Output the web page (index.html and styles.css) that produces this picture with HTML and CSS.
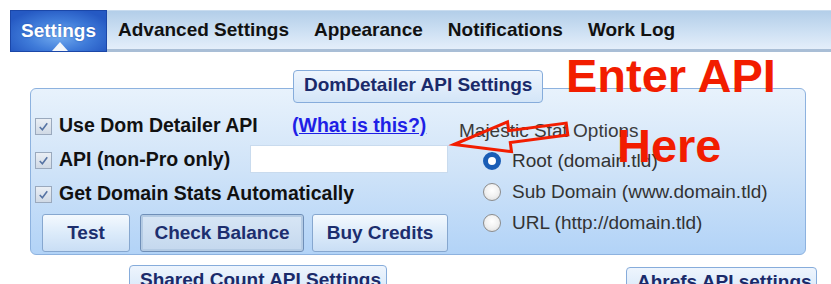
FILE: index.html
```html
<!DOCTYPE html>
<html lang="en">
<head>
<meta charset="utf-8">
<title>Settings</title>
<link rel="stylesheet" href="styles.css">
</head>
<body>
<div class="page">
  <nav class="tabs">
    <div class="tab active">Settings</div>
    <div class="tab">Advanced Settings</div>
    <div class="tab">Appearance</div>
    <div class="tab">Notifications</div>
    <div class="tab">Work Log</div>
  </nav>

  <section class="group">
    <div class="group-title">DomDetailer API Settings</div>
    <div class="group-box">
      <div class="left">
        <div class="row">
          <span class="cb"><svg viewBox="0 0 16 16" width="15" height="15"><path d="M4 8.5 L6.8 11.5 L12 4.5" fill="none" stroke="#5673a3" stroke-width="1.7"/></svg></span>
          <span class="lbl">Use Dom Detailer API</span>
          <a class="link" href="#">(What is this?)</a>
        </div>
        <div class="row">
          <span class="cb"><svg viewBox="0 0 16 16" width="15" height="15"><path d="M4 8.5 L6.8 11.5 L12 4.5" fill="none" stroke="#5673a3" stroke-width="1.7"/></svg></span>
          <span class="lbl">API (non-Pro only)</span>
          <input class="api-input" type="text">
        </div>
        <div class="row">
          <span class="cb"><svg viewBox="0 0 16 16" width="15" height="15"><path d="M4 8.5 L6.8 11.5 L12 4.5" fill="none" stroke="#5673a3" stroke-width="1.7"/></svg></span>
          <span class="lbl wide">Get Domain Stats Automatically</span>
        </div>
        <div class="buttons">
          <button class="btn btn-test">Test</button>
          <button class="btn btn-balance pressed">Check Balance</button>
          <button class="btn btn-buy">Buy Credits</button>
        </div>
      </div>
      <div class="right">
        <div class="opt-title">Majestic Stat Options</div>
        <div class="radio-row"><span class="radio on"></span><span>Root (domain.tld)</span></div>
        <div class="radio-row"><span class="radio"></span><span>Sub Domain (www.domain.tld)</span></div>
        <div class="radio-row"><span class="radio"></span><span>URL (http://domain.tld)</span></div>
      </div>
    </div>
  </section>

  <div class="next-groups">
    <div class="group-title shared">Shared Count API Settings</div>
    <div class="group-title ahrefs">Ahrefs API settings</div>
  </div>

  <div class="note note-enter">Enter API</div>
  <div class="note note-here">Here</div>
  <svg class="arrow" width="831" height="284" viewBox="0 0 831 284">
    <polygon points="454,144.5 507.5,121.8 508.7,130.7 566.2,123.1 567.8,134.9 510.3,142.6 511.5,151.6" fill="none" stroke="#f21d00" stroke-width="3" stroke-linejoin="miter"/>
  </svg>
</div>
</body>
</html>
```

FILE: styles.css
```css
html, body {
  margin: 0;
  padding: 0;
  background: #ffffff;
}

body {
  font-family: "Liberation Sans", Arial, sans-serif;
  color: #111111;
  overflow: hidden;
}

.page {
  position: relative;
  width: 831px;
  height: 284px;
  padding-top: 10px;
  box-sizing: border-box;
  overflow: hidden;
}

/* ---------- tabs ---------- */
.tabs {
  display: flex;
  margin-left: 10px;
  height: 42px;
  box-sizing: border-box;
  background: linear-gradient(#b3cee9, #d0e2f4 60%, #e4eefa);
  border-bottom: 3px solid #a9bed6;
  border-top: 1px solid #c9dcef;
}

.tab {
  display: flex;
  align-items: center;
  padding: 0 12.5px;
  font-size: 19px;
  font-weight: bold;
  color: #111111;
  white-space: nowrap;
}

.tab.active {
  position: relative;
  width: 97px;
  box-sizing: border-box;
  justify-content: center;
  padding: 0;
  margin-top: -1px;
  margin-bottom: -3px;
  margin-right: -1.5px;
  color: #ffffff;
  border: 1px solid #1b47a8;
  background: radial-gradient(ellipse 60% 70% at 50% 62%, #74adf0 0%, #3f7bd9 55%, #2559c3 100%);
  text-shadow: 0 0 2px rgba(20, 60, 150, 0.6);
}

.tab.active::after {
  content: "";
  position: absolute;
  left: 41px;
  bottom: 0;
  width: 0;
  height: 0;
  border-left: 8px solid transparent;
  border-right: 8px solid transparent;
  border-bottom: 9px solid #f3f6fa;
}

/* ---------- group ---------- */
.group {
  margin-top: 18px;
}

.group-title {
  display: inline-block;
  position: relative;
  z-index: 1;
  box-sizing: border-box;
  height: 33px;
  padding: 0 10px 4px;
  line-height: 27px;
  font-size: 19px;
  font-weight: bold;
  color: #1a2a6a;
  border: 1px solid #86acdb;
  border-radius: 4px;
  background: linear-gradient(#eef5fd, #d3e5f8);
  white-space: nowrap;
}

.group > .group-title {
  margin-left: 293px;
}

.group-box {
  display: flex;
  margin-top: -15px;
  margin-left: 30px;
  width: 776px;
  box-sizing: border-box;
  padding: 19px 0 2px 4px;
  border: 1px solid #8db2df;
  border-radius: 6px;
  background: linear-gradient(#e8f2fc, #cfe3f8 50%, #b2d3f7);
}

/* ---------- left column ---------- */
.left {
  width: 413px;
  flex: none;
}

.row {
  display: grid;
  grid-template-columns: 24px 191px 198px;
  align-items: center;
  height: 34px;
}

.cb {
  display: block;
  width: 17px;
  height: 17px;
  margin-top: 3px;
  box-sizing: border-box;
  border: 1px solid #9aa9bd;
  background: linear-gradient(#eaeff5, #d0d9e5);
}

.cb svg {
  display: block;
  width: 15px;
  height: 15px;
}

.lbl {
  font-size: 19.5px;
  font-weight: bold;
  color: #111111;
  white-space: nowrap;
}

.lbl.wide {
  grid-column: 2 / 4;
}

.link {
  margin-left: 42px;
  font-size: 19.5px;
  font-weight: bold;
  color: #1f1fe6;
  text-decoration: underline;
  white-space: nowrap;
}

.api-input {
  width: 198px;
  height: 28px;
  margin: 0;
  box-sizing: border-box;
  border: 1px solid #c9dbee;
  background: #ffffff;
  outline: none;
}

.buttons {
  display: flex;
  margin-top: 4px;
  margin-left: 7px;
}

.btn {
  height: 38px;
  margin: 0;
  padding: 0;
  box-sizing: border-box;
  font-family: "Liberation Sans", Arial, sans-serif;
  font-size: 19px;
  font-weight: bold;
  color: #1c2e6e;
  border: 1px solid #86a7cf;
  border-radius: 3px;
  background: linear-gradient(#f4f9fe, #dcebfa 50%, #c9def5);
}

.btn-test { width: 88px; }
.btn-balance { width: 164px; margin-left: 10px; }
.btn-buy { width: 136px; margin-left: 8px; }

.btn.pressed {
  border-color: #6f8fb8;
  background: linear-gradient(#d8e6f5, #c4d8ee);
  box-shadow: inset 0 0 0 2px #b4cbe4;
}

/* ---------- right column ---------- */
.right {
  margin-left: 11px;
  font-size: 19px;
  color: #333333;
}

.opt-title {
  margin-top: 12px;
  height: 22px;
  line-height: 22px;
  color: #3a3a3a;
  white-space: nowrap;
}

.radio-row {
  display: flex;
  align-items: center;
  height: 31px;
  padding-left: 24px;
  white-space: nowrap;
}

.opt-title + .radio-row {
  margin-top: 3px;
}

.radio {
  display: block;
  width: 18px;
  height: 18px;
  margin-right: 11px;
  box-sizing: border-box;
  border-radius: 50%;
  border: 1.5px solid #8c8c8c;
  background: radial-gradient(circle at 50% 40%, #ffffff 0%, #f1f1f1 50%, #d9d9d9 100%);
}

.radio.on {
  border: 5px solid #1a5db6;
  background: #ffffff;
}

/* ---------- following groups (cut off) ---------- */
.next-groups {
  display: flex;
  align-items: flex-start;
  margin-top: 10px;
}

.next-groups .shared {
  margin-left: 129px;
  width: 258px;
}

.next-groups .ahrefs {
  margin-left: auto;
  margin-right: 14px;
  margin-top: 2px;
  width: 191px;
}

/* ---------- annotations ---------- */
.note {
  position: absolute;
  font-family: "Liberation Sans", Arial, sans-serif;
  font-weight: bold;
  font-size: 47px;
  line-height: 1;
  color: #f21d00;
  white-space: nowrap;
  z-index: 3;
}

.note-enter {
  left: 566px;
  top: 52px;
}

.note-here {
  left: 617px;
  top: 122px;
}

.arrow {
  position: absolute;
  left: 0;
  top: 0;
  z-index: 4;
  pointer-events: none;
}
```
